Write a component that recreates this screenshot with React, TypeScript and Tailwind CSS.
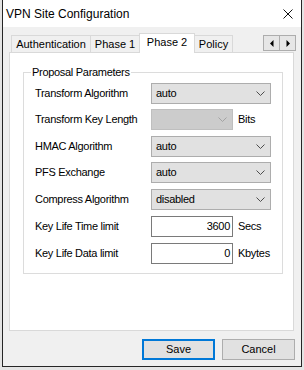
import React from "react";

const font = { fontFamily: '"Liberation Sans", Arial, sans-serif' };

function Chevron({ color = "#4d4d4d" }: { color?: string }) {
  return (
    <svg width="9" height="5" viewBox="0 0 9 5" className="block">
      <path d="M0.5 0.5 L4.5 4.5 L8.5 0.5" fill="none" stroke={color} strokeWidth="1" />
    </svg>
  );
}

function Select({ value, disabled = false, width = "w-[120px]" }: { value?: string; disabled?: boolean; width?: string }) {
  return (
    <div
      className={`${width} h-[21px] flex items-center justify-between pl-[4px] pr-[5px] border ${
        disabled ? "bg-[#cccccc] border-[#bfbfbf]" : "bg-[#e1e1e1] border-[#adadad]"
      }`}
    >
      <span className="leading-none">{value ?? ""}</span>
      <Chevron color={disabled ? "#a3a3a3" : "#4d4d4d"} />
    </div>
  );
}

function Row({ label, children, mt }: { label: string; children: React.ReactNode; mt: string }) {
  return (
    <div className={`flex items-center h-[21px] ${mt}`}>
      <div className="w-[116px] shrink-0">{label}</div>
      {children}
    </div>
  );
}

export default function App() {
  return (
    <div className="w-[304px] h-[370px] bg-[#e4e4e4] pl-[2px] text-[11px] text-black overflow-hidden" style={font}>
      <div className="w-[300px] h-[367px] border-x border-b border-[#262626] bg-[#f0f0f0] flex flex-col">
        {/* Title bar */}
        <div className="h-[27px] bg-white flex items-center justify-between pl-[3px] pr-[8px] shrink-0">
          <span className="text-[12px] leading-none">VPN Site Configuration</span>
          <svg width="10" height="10" viewBox="0 0 10 10" className="block">
            <path d="M0.5 0.5 L9.5 9.5 M9.5 0.5 L0.5 9.5" stroke="#111" strokeWidth="1" />
          </svg>
        </div>

        {/* Body */}
        <div className="flex flex-col pl-[6px] pr-[6px] pt-[6px]">
          {/* Tab row */}
          <div className="h-[20px] -mb-px flex items-start pl-[2px] mr-[1px] relative z-10">
            <div className="mt-[2px] h-[17px] w-[80px] border-l border-t border-r border-[#d9d9d9] bg-[#f0f0f0] flex items-center justify-center leading-none">
              Authentication
            </div>
            <div className="mt-[2px] h-[17px] w-[48px] border-t border-[#d9d9d9] bg-[#f0f0f0] flex items-center justify-center leading-none">
              Phase 1
            </div>
            <div className="h-[20px] w-[56px] border-l border-t border-r border-[#d9d9d9] bg-white flex items-start pt-[3px] justify-center leading-none">
              Phase 2
            </div>
            <div className="mt-[2px] h-[17px] w-[38px] border-t border-r border-[#d9d9d9] bg-[#f0f0f0] flex items-center justify-center leading-none">
              Policy
            </div>
            <div className="ml-auto -mr-[2px] mt-[2px] flex">
              <div className="w-[17px] h-[16px] border border-[#adadad] bg-[#e6e6e6] flex items-center justify-center">
                <svg width="4" height="7" viewBox="0 0 4 7" className="block">
                  <path d="M3.5 0 L0 3.5 L3.5 7 Z" fill="#000" />
                </svg>
              </div>
              <div className="w-[17px] h-[16px] -ml-px border border-[#adadad] bg-[#e6e6e6] flex items-center justify-center">
                <svg width="4" height="7" viewBox="0 0 4 7" className="block">
                  <path d="M0.5 0 L4 3.5 L0.5 7 Z" fill="#000" />
                </svg>
              </div>
            </div>
          </div>

          {/* Tab panel */}
          <div className="h-[279px] mr-[1px] border border-[#d9d9d9] bg-white pt-[19px]">
            <div className="relative ml-[13px] mr-[10px] h-[202px] border border-[#dcdcdc] pt-[10px] pl-[11px] tracking-[-0.3px]">
              <span className="absolute -top-[7px] left-[7px] px-[1px] bg-white leading-[13px]">Proposal Parameters</span>
              <Row label="Transform Algorithm" mt="">
                <Select value="auto" />
              </Row>
              <Row label="Transform Key Length" mt="mt-[5px]">
                <Select disabled width="w-[82px]" />
                <span className="ml-[5px]">Bits</span>
              </Row>
              <Row label="HMAC Algorithm" mt="mt-[6px]">
                <Select value="auto" />
              </Row>
              <Row label="PFS Exchange" mt="mt-[5px]">
                <Select value="auto" />
              </Row>
              <Row label="Compress Algorithm" mt="mt-[6px]">
                <Select value="disabled" />
              </Row>
              <Row label="Key Life Time limit" mt="mt-[6px]">
                <div className="w-[82px] h-[21px] bg-white border border-[#7a7a7a] flex items-center justify-end pr-[2px] leading-none">
                  3600
                </div>
                <span className="ml-[5px]">Secs</span>
              </Row>
              <Row label="Key Life Data limit" mt="mt-[6px]">
                <div className="w-[82px] h-[21px] bg-white border border-[#7a7a7a] flex items-center justify-end pr-[2px] leading-none">
                  0
                </div>
                <span className="ml-[5px]">Kbytes</span>
              </Row>
            </div>
          </div>

          {/* Buttons */}
          <div className="mt-[8px] flex justify-end gap-[7px]">
            <div className="w-[73px] h-[21px] border-2 border-[#0078d7] bg-[#e1e1e1] flex items-center justify-center leading-none">
              Save
            </div>
            <div className="w-[73px] h-[21px] border border-[#adadad] bg-[#e1e1e1] flex items-center justify-center leading-none">
              Cancel
            </div>
          </div>
        </div>
      </div>
    </div>
  );
}
